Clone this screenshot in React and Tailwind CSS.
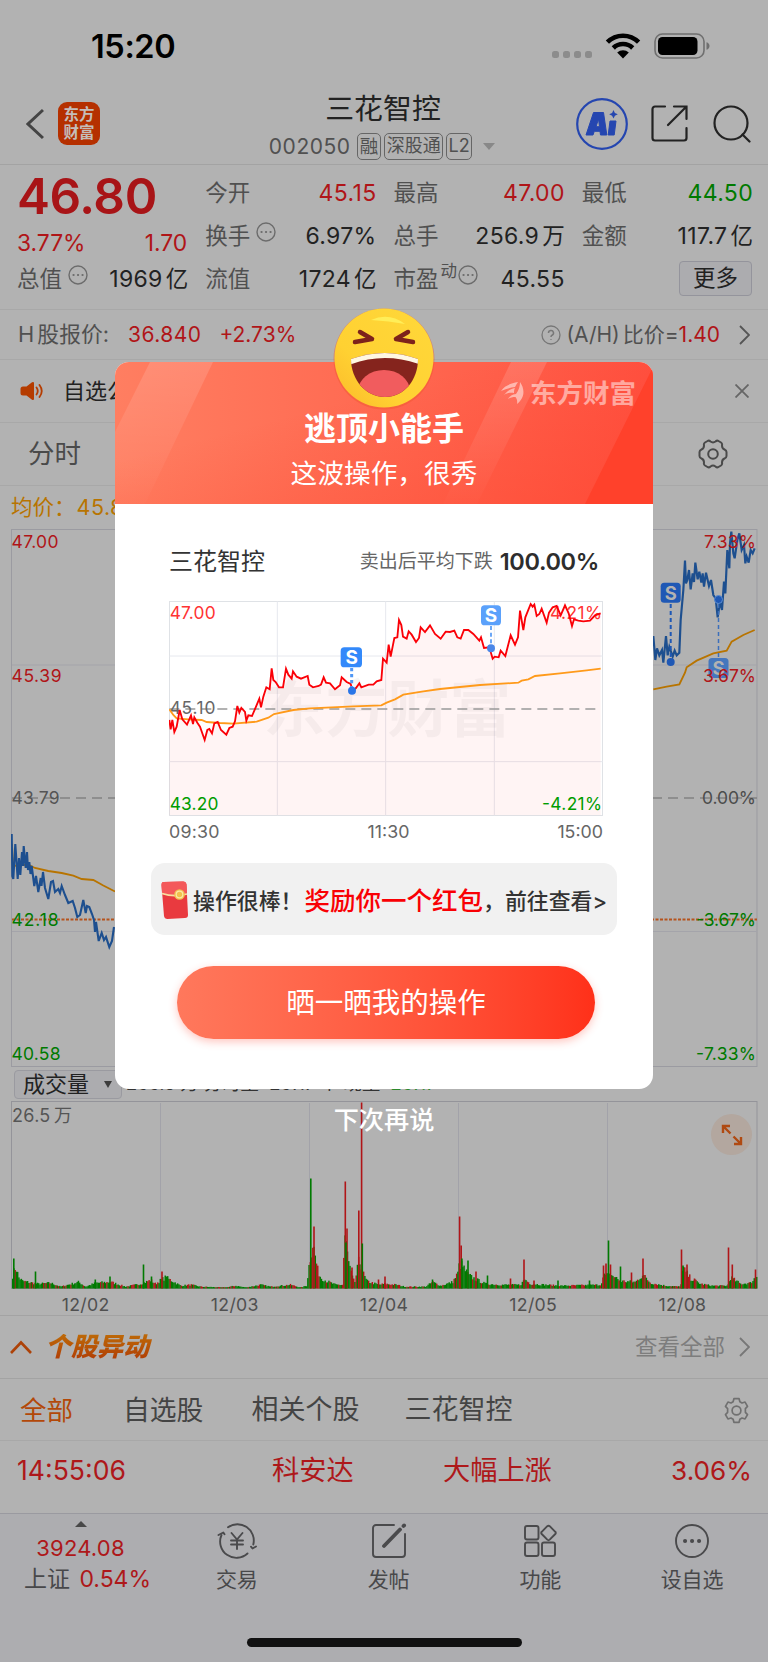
const STATS = [
    [
        { label: '今开', value: '45.15', color: 'text-[#b01518]' },
        { label: '换手', info: true, value: '6.97%' },
        { label: '流值', value: '1724', unit: '亿' },
    ],
    [
        { label: '最高', value: '47.00', color: 'text-[#b01518]' },
        { label: '总手', value: '256.9', unit: '万' },
        { label: '市盈', sup: '动', info: true, value: '45.55' },
    ],
    [
        { label: '最低', value: '44.50', color: 'text-[#007a00]' },
        { label: '金额', value: '117.7', unit: '亿' },
    ],
];

const DATES = ['12/02', '12/03', '12/04', '12/05', '12/08'];

const PRICE_LINE =
    '178,570 182,598 187,570 193,606 200,590 209,540 217,568 231,584 243,556 249,582 253,562 262,578 270,590 284,630 292,600 298,597 306,610 313,580 323,576 333,600 349,614 358,594 368,590 375,574 382,528 388,548 394,534 405,546 409,572 415,556 426,558 438,530 448,506 453,532 460,500 469,472 479,478 485,415 490,450 497,456 507,472 519,472 528,416 535,434 545,446 549,424 560,440 573,446 593,438 598,464 609,472 626,468 633,464 641,442 648,458 660,460 675,478 690,466 695,442 710,456 722,462 728,482 738,474 748,460 754,472 776,464 790,464 800,454 814,450 819,386 830,398 836,344 842,380 853,324 862,322 867,270 874,285 879,320 890,326 896,304 905,314 918,336 927,324 932,292 945,306 960,286 975,312 992,326 1007,305 1020,306 1033,302 1042,322 1052,326 1062,300 1075,300 1090,312 1108,332 1113,322 1122,354 1138,352 1148,386 1154,380 1166,382 1172,362 1186,378 1202,316 1215,344 1224,322 1230,242 1240,300 1246,262 1262,222 1268,230 1273,224 1280,258 1288,252 1295,236 1310,278 1317,248 1328,232 1340,228 1352,256 1365,226 1376,250 1386,288 1392,268 1405,272 1420,274 1440,272 1455,256 1472,250';

const AVG_LINE =
    '178,538 190,555 200,565 235,568 275,570 290,576 330,579 370,581 440,575 475,563 492,552 550,540 600,535 730,529 814,526 830,518 855,508 880,494 940,484 990,477 1050,471 1110,465 1225,458 1235,452 1255,448 1275,438 1350,430 1430,421 1472,416';

const DAY_LEFT =
    '11.7,834 12.3,876 13.3,879 15.3,844 17.7,879 19,858 20.3,875 22,852 23,866 23.7,846 25.7,868 27,852 28,870 29.3,862 30.5,874 31.7,866 34.3,886 36,876 38.3,892 40.7,878 41.5,886 43,872 45,888 48.3,899 51,882 53,881 55,892 58.3,889 60,893 61.7,886 65,895 68.3,903 72.7,901 75,908 77.3,917 80,915 83.3,900 85.7,913 87,906 89.3,907 92,914 94,920 95,932 96,922 98.7,941 101.7,933 104,940 106,937 109.3,947 112,941 114,927';

const DAY_RIGHT =
    '760,318 766,390 771,355 778,376 786,360 790,398 798,318 803,376 808,350 818,380 824,362 830,376 838,368 842,270 850,180 855,92 858,160 862,150 867,120 872,178 878,130 882,156 886,98 893,148 898,125 904,158 908,130 912,170 918,128 927,168 933,150 940,195 947,205 953,262 960,215 966,240 972,155 976,190 982,60 988,115 990,40 994,5 1000,70 1004,85 1012,30 1018,10 1025,60 1032,45 1036,100 1040,80 1046,98 1052,60 1058,70 1064,55';

// [x, height] outline that the one-minute volume bars fall under
const VOLUME_SHAPE = [
    [12, 14], [15, 24], [18, 12], [22, 8], [32, 6], [38, 5], [50, 6], [60, 2], [78, 7], [85, 2], [95, 6], [110, 7], [125, 2],
    [140, 5], [150, 9], [155, 5], [160, 9], [165, 12], [172, 8], [180, 3], [190, 4], [200, 2], [225, 1], [235, 3], [245, 1],
    [260, 4], [270, 2], [290, 4], [300, 1], [306, 3], [309, 30], [312, 50], [314, 38], [317, 20], [320, 12], [326, 8],
    [335, 4], [342, 4], [344, 58], [348, 28], [351, 14], [354, 6], [358, 28], [360, 28], [363, 15], [366, 8], [372, 6],
    [378, 4], [384, 5], [396, 4], [404, 2], [425, 2], [432, 7], [440, 3], [452, 7], [457, 16], [459, 27], [463, 22],
    [468, 14], [475, 10], [485, 5], [500, 4], [520, 4], [524, 10], [530, 5], [545, 4], [560, 3], [600, 4], [603, 14],
    [612, 14], [620, 8], [635, 7], [642, 15], [650, 6], [665, 3], [680, 2], [682, 22], [690, 11], [700, 5], [712, 3],
    [727, 3], [730, 12], [740, 5], [750, 6], [757, 15],
];

const VOLUME_SPIKES = [
    [13.8, 30, 'g'], [35.5, 17, 'g'], [95.3, 9, 'g'], [110, 12, 'g'], [143.5, 24, 'g'], [151.5, 12, 'g'], [162, 17, 'r'],
    [166.5, 12, 'g'], [310.8, 110, 'g'], [314, 62, 'r'], [345.3, 107, 'r'], [347, 60, 'r'], [345.9, 46, 'g'], [352, 21, 'r'],
    [358.8, 78, 'r'], [361.6, 186, 'r'], [362.3, 45, 'g'], [378.5, 9, 'r'], [385, 12, 'r'], [432.5, 9, 'g'], [459.6, 72, 'r'],
    [461.2, 43, 'r'], [461.9, 30, 'g'], [468, 28, 'g'], [476, 17, 'r'], [487.5, 13, 'g'], [510.5, 10, 'r'], [524, 29, 'r'],
    [534, 8, 'r'], [558, 8, 'g'], [589.5, 8, 'g'], [603.5, 23, 'r'], [606, 25, 'r'], [608.5, 48, 'g'], [610.5, 24, 'r'],
    [620.5, 22, 'g'], [631.5, 16, 'r'], [643, 30, 'r'], [681.5, 39, 'r'], [683, 23, 'g'], [687, 24, 'r'], [694.5, 10, 'r'],
    [728.5, 41, 'r'], [732.3, 24, 'r'], [755.5, 19, 'r'],
];

function volumeBars() {
    const bars = [];
    let seed = 7;
    let k = 0;
    for (let x = 12; x < 757; x += 1.24) {
        while (k < VOLUME_SHAPE.length - 2 && VOLUME_SHAPE[k + 1][0] < x) k++;
        const [x0, h0] = VOLUME_SHAPE[k];
        const [x1, h1] = VOLUME_SHAPE[k + 1];
        seed = (seed * 16807) % 2147483647;
        const r = seed / 2147483647;
        const h = h0 + ((h1 - h0) * (x - x0)) / (x1 - x0);
        bars.push({ x, h: Math.max(1.3, h * (0.7 + r * 0.45)), c: (r * 10) % 1 > 0.7 ? 'r' : 'g' });
    }
    return bars;
}

const BARS = volumeBars();

function InfoDot() {
    return (
        <svg className="w-5 h-5 shrink-0" viewBox="0 0 20 20" fill="none" stroke="#6c6c6c" strokeWidth="1.4">
            <circle cx="10" cy="10" r="9" />
            <path d="M5.5 10h.1M10 10h.1M14.5 10h.1" strokeWidth="2.2" strokeLinecap="round" />
        </svg>
    );
}

function Chevron({ color = '#555' }) {
    return (
        <svg className="w-[11px] h-5 shrink-0" viewBox="0 0 11 20" fill="none" stroke={color} strokeWidth="1.8">
            <path d="M1 1l9 9-9 9" />
        </svg>
    );
}

function SellMark({ x, y, size = 20, fill }) {
    return (
        <g>
            <rect x={x - size / 2} y={y - size / 2} width={size} height={size} rx="3.5" fill={fill} />
            <text x={x} y={y + size * 0.34} textAnchor="middle" fontSize={size * 0.92} fontWeight="700" fill="currentColor">S</text>
        </g>
    );
}

function StatusBar() {
    return (
        <div className="h-[92px] flex items-center justify-between pl-[91px] pr-[57px] pt-[2px]">
            <span className="text-[32.5px] font-semibold text-black leading-none tracking-[-0.4px]">15:20</span>
            <div className="flex items-center">
                <div className="flex gap-1 mt-[15px] mr-[13px]">
                    {[1, 2, 3, 4].map((i) => <span key={i} className="w-[7px] h-[7px] rounded-[2.5px] bg-[#8c8c8c]" />)}
                </div>
                <svg className="w-[36px] h-[26px] mr-[13px] -mt-[2px]" viewBox="0 0 36 26" fill="none" stroke="#000" strokeWidth="4.6">
                    <path d="M2.4 9.2a22 22 0 0 1 31.2 0" />
                    <path d="M8.3 15a13.8 13.8 0 0 1 19.4 0" />
                    <path d="M12.2 19.6a8.2 8.2 0 0 1 11.6 0L18 25.4z" fill="#000" stroke="none" />
                </svg>
                <svg className="w-[57px] h-[26px] -mt-[3px]" viewBox="0 0 57 26">
                    <rect x="1" y="1" width="49" height="24" rx="7.5" fill="none" stroke="#6f6f6f" strokeWidth="1.6" />
                    <rect x="4" y="4" width="39.5" height="18" rx="4.5" fill="#000" />
                    <path d="M52.5 9.2c4 1.200 4 6.400 0 7.600z" fill="#6f6f6f" />
                </svg>
            </div>
        </div>
    );
}

function Header() {
    return (
        <header className="h-[73px] border-b border-[#a3a3a3] grid grid-cols-[250px_1fr_250px] pb-[9px]">
            <div className="flex items-center pl-[26px] pb-[5px]">
                <svg className="w-[18px] h-8" viewBox="0 0 18 32" fill="none" stroke="#444" strokeWidth="3">
                    <path d="M17 2L2 16l15 14" />
                </svg>
                <div className="ml-[14px] w-[42px] h-[43px] rounded-[9px] bg-[#b53000] text-[#c4bdb9] text-[15.5px] font-bold leading-[18px] flex flex-col items-center justify-center">
                    <span>东方</span>
                    <span>财富</span>
                </div>
            </div>
            <div className="flex flex-col items-center">
                <h1 className="text-[28.9px] leading-[34px] text-[#222] -ml-[2px]">三花智控</h1>
                <div className="flex items-center h-7 mt-[6px] ml-[-4px] whitespace-nowrap text-[#505050]">
                    <span className="text-[21px] leading-none tracking-[0.55px] mr-[6px]">002050</span>
                    <span className="h-[27px] px-[2px] mr-[3px] border-[1.5px] border-[#666] rounded-[5px] text-[18.5px] leading-6">融</span>
                    <span className="h-[27px] w-[59px] text-center mr-[3px] border-[1.5px] border-[#666] rounded-[5px] text-[18px] leading-6">深股通</span>
                    <span className="h-[27px] w-[26px] text-center border-[1.5px] border-[#666] rounded-[5px] text-[18px] leading-6">L2</span>
                    <span className="ml-[11px] border-x-[6px] border-x-transparent border-t-[7px] border-t-[#888]" />
                </div>
            </div>
            <div className="flex items-center justify-end pr-[17px] pb-[5px]">
                <svg className="w-[52px] h-[52px] mr-[23px]" viewBox="0 0 52 52">
                    <circle cx="26" cy="26" r="24.800" fill="none" stroke="#2546b0" strokeWidth="2.200" />
                    <path d="M17.500 14.500h10l3.300 22.500h-6.300l-.5-3.700h-5.700L17 37h-7zM22.500 21l-2.500 7.700h3.500z" fill="#2546b0" fillRule="evenodd" stroke="#2546b0" strokeLinejoin="round" />
                    <path d="M34 23h6l-1.800 14h-6z" fill="#2546b0" stroke="#2546b0" strokeLinejoin="round" />
                    <path d="M37.500 12l1.400 2.900 2.900 1.400-2.900 1.400-1.400 2.900-1.400-2.900-2.900-1.400 2.900-1.400z" fill="#2546b0" />
                </svg>
                <svg className="w-[37px] h-[37px] mr-[25px]" viewBox="0 0 37 37" fill="none" stroke="#222" strokeWidth="2.200" strokeLinecap="round">
                    <path d="M14 1.500H4a2.500 2.500 0 0 0-2.500 2.500v29A2.500 2.500 0 0 0 4 35.500h29a2.500 2.500 0 0 0 2.500-2.500V23" />
                    <path d="M23 1.500h12.500V14M35 2L17 20" />
                </svg>
                <svg className="w-[38px] h-[38px]" viewBox="0 0 38 38" fill="none" stroke="#222" strokeWidth="2.200" strokeLinecap="round">
                    <circle cx="18" cy="18" r="16.500" />
                    <path d="M29.500 29.500l7 7" />
                </svg>
            </div>
        </header>
    );
}

function Stat({ label, sup, info, value, unit, color = 'text-[#222]' }) {
    return (
        <div className="h-[43px] flex items-center whitespace-nowrap">
            <span className="text-[22.5px] text-[#505050]">{label}</span>
            {sup && <span className="text-[16.5px] text-[#505050] ml-[2px] mb-4">{sup}</span>}
            {info && <span className={sup ? 'ml-[1px] mb-[10px]' : 'ml-[6px] mb-[10px]'}><InfoDot /></span>}
            <span className={`ml-auto flex items-center text-[23px] tracking-[0.35px] -mr-px ${color}`}>
                {value}
                {unit && <span className="ml-[3px] text-[22.5px] tracking-normal">{unit}</span>}
            </span>
        </div>
    );
}

function Quote() {
    return (
        <section className="h-[145px] border-b border-[#a8a8a8] pl-[17px] pr-4 pt-[7px] grid grid-cols-4 gap-x-[18px] leading-none">
            <div className="text-[22.8px] text-[#b01518]">
                <div className="h-[50px] flex items-center text-[49.5px] font-semibold tracking-[-0.4px] text-[#a81417]">46.80</div>
                <div className="h-[43px] flex items-center justify-between">
                    <span>3.77%</span>
                    <span>1.70</span>
                </div>
                <div className="-mt-[7px]">
                    <Stat label="总值" info value="1969" unit="亿" />
                </div>
            </div>
            {STATS.map((col, i) => (
                <div key={i}>
                    {col.map((s) => <Stat key={s.label} {...s} />)}
                    {i === 2 && (
                        <div className="h-[41px] flex items-center justify-end">
                            <button className="w-[73px] h-[35px] rounded border border-[#94949c] bg-[#acacaf] text-[22.5px] text-[#222]">更多</button>
                        </div>
                    )}
                </div>
            ))}
        </section>
    );
}

function DayChart() {
    return (
        <svg className="block ml-[11px] w-[747px] h-[538px] text-[#b2b2b2]" viewBox="11 529 747 538" fill="none">
            <rect x="11.500" y="529.500" width="745.500" height="537" stroke="#9b9ba1" />
            <path d="M12 665h745M12 931.500h745" stroke="#a4a4aa" />
            <path d="M12 798h745" stroke="#828282" strokeWidth="1.500" strokeDasharray="10 6" />
            <path d="M12 919.500h745" stroke="#b5531c" strokeWidth="2" strokeDasharray="3 1.500" />
            <g fontSize="17.500">
                <text x="11.500" y="547.500" fill="#b01518" textLength="47">47.00</text>
                <text x="11.500" y="681.500" fill="#b01518" textLength="50">45.39</text>
                <text x="11.500" y="803.500" fill="#555" textLength="48">43.79</text>
                <text x="11.500" y="925.500" fill="#007a00" textLength="47">42.18</text>
                <text x="11.500" y="1059.500" fill="#007a00" textLength="49">40.58</text>
            </g>
            <polyline points="12,844 13,866 28.300,864.600 35,868 48.300,871 61.700,873 73.300,875.600 81.700,879 93.300,880 103.300,885.500 115,891.500" stroke="#b87400" strokeWidth="1.800" />
            <polyline points={DAY_LEFT} stroke="#1d4f8f" strokeWidth="2.100" />
            <g transform="translate(400 530) scale(.33333)">
                <polyline points={DAY_RIGHT} stroke="#1d4f8f" strokeWidth="6.500" />
                <polyline points="760,478 800,470 838,463 855,428 860,412 890,392 940,370 980,362 995,335 1030,315 1064,300" stroke="#b87400" strokeWidth="5.500" />
            </g>
            <path d="M670.700 604v54" stroke="#1f58b5" strokeWidth="2" strokeDasharray="4 3" />
            <path d="M718.500 604v55" stroke="#3c6fbb" strokeWidth="1.500" strokeDasharray="4 3" />
            <circle cx="670.700" cy="662" r="4" fill="#1f58b5" />
            <circle cx="718.500" cy="599.500" r="4" fill="#1f58b5" stroke="#5b8bd0" />
            <SellMark x={670.7} y={592.7} fill="#1f58b5" />
            <SellMark x={718.5} y={668} fill="#4577bd" />
            <g fontSize="17.500" textAnchor="end">
                <text x="756" y="547.500" fill="#b01518" textLength="52">7.33%</text>
                <text x="756" y="681.500" fill="#b01518" textLength="53">3.67%</text>
                <text x="756" y="803.500" fill="#4c4c4c" textLength="54">0.00%</text>
                <text x="756" y="925.500" fill="#007a00" textLength="60">-3.67%</text>
                <text x="756" y="1059.500" fill="#007a00" textLength="60">-7.33%</text>
            </g>
        </svg>
    );
}

function VolumeChart() {
    const tint = (c) => (c === 'r' ? '#b01518' : '#007a00');
    return (
        <div className="relative ml-[11px] w-[747px] h-[188px]">
            <svg className="block w-full h-full" viewBox="11 1101 747 188">
                <rect x="11.500" y="1101.500" width="745.500" height="187" fill="none" stroke="#94949a" />
                <path d="M160.500 1103v185M309.500 1103v185M458.500 1103v185M607.500 1103v185" stroke="#a2a2a9" />
                {BARS.map((b) => <rect key={b.x} x={b.x} y={1288.500 - b.h} width="1.450" height={b.h} fill={tint(b.c)} />)}
                {VOLUME_SPIKES.map(([x, h, c]) => <rect key={x} x={x - 0.8} y={1288.500 - h} width="1.600" height={h} fill={tint(c)} />)}
            </svg>
            <span className="absolute left-[1px] top-[1px] text-[18px] text-[#555] tracking-[0.3px] [word-spacing:-2px]">26.5 万</span>
            <span className="absolute right-[6px] top-[13px] w-[41px] h-[41px] rounded-full bg-[#b3a79f] flex items-center justify-center">
                <svg className="w-[22px] h-[22px]" viewBox="0 0 22 22" fill="none" stroke="#b04a12" strokeWidth="2.400">
                    <path d="M9 2H2v7M2.500 2.500l7 7M13 20h7v-7M19.500 19.500l-7-7" />
                </svg>
            </span>
        </div>
    );
}

function Gear() {
    return (
        <svg className="w-[27px] h-[27px]" viewBox="0 0 24 24" fill="none" stroke="#707070" strokeWidth="1.500" strokeLinejoin="round">
            <path d="M9.700 1.500h4.600l.7 2.700 1.900 1.100 2.700-.8 2.200 3.900-1.900 2v3.200l1.900 2-2.200 3.900-2.700-.8-1.900 1.100-.7 2.700H9.700L9 19.800l-1.900-1.100-2.700.8-2.200-3.900 1.900-2v-3.200l-1.900-2 2.200-3.900 2.700.8L9 4.200z" />
            <circle cx="12" cy="12" r="3.900" />
        </svg>
    );
}

function Movers() {
    return (
        <section>
            <div className="h-[64px] border-y border-[#a3a3a3] flex items-center px-[10px] pr-[18px]">
                <svg className="w-[22px] h-[14px] mr-[13px]" viewBox="0 0 22 14" fill="none" stroke="#ad4208" strokeWidth="2.600">
                    <path d="M1 13L11 2.500 21 13" />
                </svg>
                <h2 className="text-[26px] font-black italic leading-none bg-linear-to-b from-[#bd6a08] to-[#b03c05] bg-clip-text text-transparent pr-2">个股异动</h2>
                <span className="ml-auto mr-[14px] text-[22.5px] text-[#7d7d7d]">查看全部</span>
                <Chevron color="#777" />
            </div>
            <div className="h-[62px] border-b border-[#a8a8a8] flex items-center pl-5 pr-[18px] pt-[2px] text-[27px] text-[#444] whitespace-nowrap">
                <span className="text-[#b34808] text-[26.5px]">全部</span>
                <span className="ml-[50px] text-[26.800px]">自选股</span>
                <span className="ml-[48px]">相关个股</span>
                <span className="ml-[45px]">三花智控</span>
                <span className="ml-auto"><Gear /></span>
            </div>
            <div className="h-[72px] pb-[12px] flex items-center pl-[17px] pr-4 text-[27.200px] text-[#ae181a] whitespace-nowrap">
                <span className="w-[255px] text-[26.600px]">14:55:06</span>
                <span className="w-[171px]">科安达</span>
                <span>大幅上涨</span>
                <span className="ml-auto text-[26.200px]">3.06%</span>
            </div>
        </section>
    );
}

function TabIcon({ children }) {
    return (
        <svg className="w-9 h-9 overflow-visible" viewBox="0 0 36 36" fill="none" stroke="#4a4a4c" strokeWidth="1.900" strokeLinecap="round" strokeLinejoin="round">
            {children}
        </svg>
    );
}

function TabBar() {
    return (
        <nav className="grow bg-[#adadb0] border-t border-[#9a9aa0] flex flex-col items-center">
            <div className="w-full grid grid-cols-[161px_repeat(4,1fr)] text-[21px] leading-none text-[#48484a]">
                <div className="flex flex-col items-center text-[22px] pt-[7px]">
                    <span className="border-x-[6px] border-x-transparent border-b-[6px] border-b-[#484848]" />
                    <span className="mt-[10px] text-[#ae181a] tracking-[0.2px]">3924.08</span>
                    <span className="mt-[9px] text-[23px] ml-[14px] whitespace-nowrap">上证 <span className="text-[#ae181a] ml-[3px]">0.54%</span></span>
                </div>
                <div className="flex flex-col items-center pt-[9px] gap-[10px]">
                    <TabIcon>
                        <path d="M9 4.300A16.300 16.300 0 0 1 34.300 21.500M28.500 30.500A16.300 16.300 0 0 1 2.500 12" />
                        <path d="M-.5 12l4.800-2.500 1.200 1.800M37 23.500l-3.500 2-1.500-1.800" />
                        <path d="M12.500 10l5.500 6.500 5.500-6.500M18 16.500V26M12 17.500h12M12 21.500h12" />
                    </TabIcon>
                    <span>交易</span>
                </div>
                <div className="flex flex-col items-center pt-[9px] gap-[10px]">
                    <TabIcon>
                        <path d="M23 2H5a3 3 0 0 0-3 3v26a3 3 0 0 0 3 3h26a3 3 0 0 0 3-3V11" />
                        <path d="M13 23L29 6.500M32.500 3l.6-.6" strokeWidth="3.800" />
                    </TabIcon>
                    <span>发帖</span>
                </div>
                <div className="flex flex-col items-center pt-[9px] gap-[10px]">
                    <TabIcon>
                        <rect x="3" y="3" width="13.500" height="13.500" rx="2" />
                        <rect x="3" y="19.500" width="13.500" height="13.500" rx="2" />
                        <rect x="20" y="19.500" width="13" height="13.500" rx="2" />
                        <path d="M25.300 3.200a1.800 1.800 0 0 1 2.400 0l5.600 5.600a1.500 1.500 0 0 1 0 2.200l-5.600 5.600a1.800 1.800 0 0 1-2.400 0L19.700 11a1.500 1.500 0 0 1 0-2.200z" />
                    </TabIcon>
                    <span>功能</span>
                </div>
                <div className="flex flex-col items-center pt-[9px] gap-[10px]">
                    <TabIcon>
                        <circle cx="18" cy="18" r="16" />
                        <path d="M11 18h.1M18 18h.1M25 18h.1" strokeWidth="4" />
                    </TabIcon>
                    <span>设自选</span>
                </div>
            </div>
            <div className="mt-auto mb-[15px] w-[275px] h-[9px] rounded-full bg-[#111]" />
        </nav>
    );
}

function Laugh() {
    return (
        <svg className="w-[106px] h-[106px]" viewBox="-3 -3 106 106">
            <defs>
                <clipPath id="mouth">
                    <path d="M17 51q34-12 67 0c0 21-14 38-33 38S17 72 17 51z" />
                </clipPath>
                <linearGradient id="face" x1="0" y1="1" x2="1" y2="0">
                    <stop offset="0" stopColor="#fbb92a" />
                    <stop offset=".35" stopColor="#ffd132" />
                    <stop offset="1" stopColor="#ffd83a" />
                </linearGradient>
            </defs>
            <circle cx="50" cy="51" r="50.500" fill="#f0562f" opacity=".45" />
            <circle cx="50" cy="50" r="49.500" fill="url(#face)" />
            <path d="M37 12q18-8 34 4-16-3-34-4z" fill="#ffee58" />
            <path d="M26 24l12 7-17 3M74 24l-12 7 17 3" fill="none" stroke="#7d221b" strokeWidth="4.500" strokeLinecap="round" strokeLinejoin="round" />
            <g clipPath="url(#mouth)">
                <path d="M10 40h80v60H10z" fill="#85241d" />
                <path d="M10 40h82v19q-41-18-82 0z" fill="#fff7e2" />
                <ellipse cx="50" cy="83" rx="26" ry="21" fill="#f15c5e" />
            </g>
        </svg>
    );
}

function ModalHeader() {
    return (
        <div className="relative h-[142px] rounded-t-[14px] overflow-hidden bg-linear-to-r from-[#ff7e61] to-[#ff5040] text-white">
            <svg className="absolute inset-0 w-full h-full" viewBox="0 0 538 142">
                <defs>
                    <linearGradient id="stripe" x1="0" y1="0" x2="0" y2="1">
                        <stop offset="0" stopColor="#fff" stopOpacity=".14" />
                        <stop offset="1" stopColor="#fff" stopOpacity=".01" />
                    </linearGradient>
                    <linearGradient id="shade" x1="0" y1="0" x2="1" y2="1">
                        <stop offset=".35" stopColor="#ff4028" stopOpacity="0" />
                        <stop offset="1" stopColor="#ff4028" stopOpacity=".4" />
                    </linearGradient>
                </defs>
                <path d="M0 0h538v142H0z" fill="url(#shade)" />
                <path d="M35 0h63L30 142H0V70z" fill="url(#stripe)" />
                <path d="M396 0h36l-70 142h-34z" fill="url(#stripe)" />
                <path d="M538 5v137h-68z" fill="#ff412b" />
            </svg>
            <div className="absolute right-[17px] top-[17px] flex items-center text-white/50">
                <svg className="w-[23px] h-6 mr-[6px]" viewBox="0 0 23 24" fill="currentColor">
                    <path d="M0 10C4 4 10 2.500 17 1c-1 1.500-2 3-3 5C9 6.500 5 8 0 10z" />
                    <path d="M3 14c3-4 6-6 11-7-1 2-1 3-1 5-4-.5-7 0-10 2z" />
                    <path d="M7 18c2-3 4-4.500 8-5 3-4 4-8 4-12 5 7 5 16-3 22 .5-3 0-5-1.500-7-3 0-5 .5-7.500 2z" />
                </svg>
                <span className="text-[26.500px] leading-[28px] font-bold">东方财富</span>
            </div>
            <div className="relative flex flex-col items-center pt-[49px]">
                <h3 className="text-[32px] leading-9 font-bold">逃顶小能手</h3>
                <p className="mt-[10px] text-[26.700px] leading-8">这波操作，很秀</p>
            </div>
        </div>
    );
}

function TradeChart() {
    return (
        <svg className="block w-[434px] h-[215px] text-white" viewBox="177 213 1302 645" fill="none">
            <rect x="178.500" y="214.500" width="1299" height="642" stroke="#dfe2e6" strokeWidth="3" />
            <path d="M178 378h1300M178 695h1300M502 214v642M827 214v642M1153 214v642" stroke="#e6e8ee" strokeWidth="3" />
            <text x="460" y="607" fontSize="186" fontWeight="700" fill="#000" opacity=".032">东方财富</text>
            <polygon points={`178,856 ${PRICE_LINE} 1472,856`} fill="#ff0000" opacity=".045" />
            <path d="M178 537h1296" stroke="#999" strokeWidth="4.500" strokeDasharray="30 18" />
            <g fontSize="52">
                <text x="179" y="266" fill="#f33" textLength="138">47.00</text>
                <text x="179" y="553" fill="#666" textLength="137">45.10</text>
                <text x="179" y="840" fill="#009c00" textLength="146">43.20</text>
                <text x="1476" y="266" fill="#f33" textAnchor="end" textLength="156">4.21%</text>
                <text x="1476" y="840" fill="#009c00" textAnchor="end" textLength="180">-4.21%</text>
            </g>
            <polyline points={AVG_LINE} stroke="#ff9a1a" strokeWidth="5.500" />
            <polyline points={PRICE_LINE} stroke="#fb0007" strokeWidth="5.500" />
            <path d="M725 414v60" stroke="#4f97f5" strokeWidth="9" strokeDasharray="10 8" />
            <path d="M1143 288v60" stroke="#4f97f5" strokeWidth="5" strokeDasharray="12 8" />
            <circle cx="726" cy="482" r="12" fill="#2a76e8" />
            <circle cx="1143" cy="355" r="12" fill="#4a87e8" />
            <rect x="692" y="352" width="64" height="60" rx="11" fill="#3389fa" />
            <text x="725" y="403" textAnchor="middle" fontSize="57" fontWeight="700" fill="currentColor">S</text>
            <rect x="1113" y="226" width="60" height="60" rx="11" fill="#5ba1fb" />
            <text x="1143" y="277" textAnchor="middle" fontSize="57" fontWeight="700" fill="currentColor">S</text>
        </svg>
    );
}

function RedPacket() {
    return (
        <svg className="w-[27px] h-[38px] shrink-0" viewBox="0 0 27 38">
            <path d="M2.500 1L22 .5q3 0 3.500 3L27 34q0 3-3 3L6.500 38q-3 0-3.500-3L.5 4q0-3 2-3z" fill="#e93a3f" />
            <path d="M2.500 1L22 .5q3 0 3.500 3l.5 10q-10 4-25-1L.5 4q0-3 2-3z" fill="#f4585a" />
            <path d="M1 12.500q12 4 25 .5" fill="none" stroke="#f8dfa0" strokeWidth="1.800" />
            <circle cx="18.500" cy="13.500" r="5.300" fill="#f2c14e" />
            <circle cx="18.500" cy="13.500" r="3.300" fill="none" stroke="#fae9a8" strokeWidth="1.200" />
        </svg>
    );
}

function ShareModal() {
    return (
        <div className="absolute inset-x-0 top-[362px] flex flex-col items-center">
            <div className="absolute -top-[57px] z-10"><Laugh /></div>
            <div className="w-[538px] h-[727px] rounded-[14px] bg-white">
                <ModalHeader />
                <div className="mx-[54px] pt-[42px] leading-8">
                    <div className="flex items-center justify-between">
                        <span className="text-[24px] text-[#333]">三花智控</span>
                        <span className="text-[19px] text-[#666] flex items-center">
                            卖出后平均下跌
                            <span className="ml-[7px] text-[23.500px] tracking-[-0.35px] font-semibold text-[#2d2d2d]">100.00%</span>
                        </span>
                    </div>
                    <div className="mt-[23px] w-[434px]">
                        <TradeChart />
                        <div className="h-[31px] flex items-center justify-between text-[17.800px] text-[#666]">
                            <span className="tracking-[0.2px]">09:30</span>
                            <span>11:30</span>
                            <span>15:00</span>
                        </div>
                    </div>
                </div>
                <div className="ml-9 mt-4 w-[466px] h-[72px] rounded-[14px] bg-[#f1f1f1] flex items-center pl-[10px] pt-[2px] text-[21.900px] font-medium text-[#333] whitespace-nowrap">
                    <RedPacket />
                    <span className="ml-[5px] pt-[3px]">操作很棒！</span>
                    <span className="text-[25.500px] ml-[2px] pt-[2px] text-[#f90004]">奖励你一个红包</span>
                    <span className="pt-[3px]">，前往查看&gt;</span>
                </div>
                <button className="block ml-[62px] mt-[31px] pt-[2px] w-[418px] h-[73px] rounded-full bg-linear-to-r from-[#ff785c] to-[#ff3019] text-white text-[28.500px] shadow-[0_3px_8px_rgba(255,70,50,0.3)]">
                    晒一晒我的操作
                </button>
            </div>
            <button className="mt-[13px] text-[25.200px] leading-9 font-medium text-white">下次再说</button>
        </div>
    );
}

export default function App() {
    return (
        <div className="relative w-[768px] h-[1662px] overflow-hidden bg-[#b2b2b2] flex flex-col font-['Inter','Noto_Sans_CJK_SC',sans-serif]">
            <StatusBar />
            <Header />
            <Quote />
            <div className="h-[50px] border-b border-[#a8a8a8] flex items-center pl-[18px] pr-[18px] text-[21px] text-[#505050] whitespace-nowrap">
                <span className="text-[21.800px] [word-spacing:-3px]">H 股报价:</span>
                <span className="ml-[19px] text-[#b01518] tracking-[0.45px]">36.840</span>
                <span className="ml-[18px] text-[#b01518]">+2.73%</span>
                <svg className="ml-auto w-5 h-5 mr-[5px]" viewBox="0 0 20 20" fill="none" stroke="#777" strokeWidth="1.300">
                    <circle cx="10" cy="10" r="9" />
                    <path d="M7.500 8a2.500 2.500 0 1 1 3.500 2.200q-1 .5-1 1.800M10 14v.8" strokeWidth="1.500" />
                </svg>
                <span className="[word-spacing:-3px]">(A/H) 比价=</span>
                <span className="text-[#b01518] mr-[19px]">1.40</span>
                <Chevron />
            </div>
            <div className="h-[63px] border-b border-[#a8a8a8] flex items-center pl-5 pr-[19px] text-[22px] text-[#222]">
                <svg className="w-[24px] h-[20px] mr-[19px]" viewBox="0 0 24 20" fill="#b53c00">
                    <path d="M3 5.500h3.500L12 1.300q2-1 2 1v15.400q0 2-2 1l-5.500-4.200H3q-2.500 0-2.500-2.500V8Q.5 5.500 3 5.500z" />
                    <path d="M16.500 6.500q2.500 3.500 0 7M19.500 4q4.500 6 0 12" fill="none" stroke="#b53c00" strokeWidth="1.800" strokeLinecap="round" />
                </svg>
                <span>自选公告速递</span>
                <svg className="ml-auto w-[14px] h-[14px]" viewBox="0 0 14 14" stroke="#666" strokeWidth="1.800">
                    <path d="M.5.5l13 13M13.500.5l-13 13" />
                </svg>
            </div>
            <div className="h-[63px] border-b border-[#a8a8a8] flex items-center justify-between pl-7 pr-10 pb-px text-[26.500px] text-[#4a4a4a]">
                <span>分时</span>
                <svg className="w-[30px] h-[30px]" viewBox="0 0 30 30" fill="none" stroke="#4a4a4a" strokeWidth="2" strokeLinejoin="round">
                    <path d="M9.500 2q1.500-1 3 .5 2.500 1.800 5 0 1.500-1.500 3-.5l2.500 1.500q1.500 1 1 3 0 3 2.500 4 2 .8 2 2.500v4q0 1.700-2 2.500-2.500 1-2.500 4 .5 2-1 3L20.500 28q-1.500 1-3-.5-2.500-1.800-5 0-1.500 1.500-3 .5L7 26.500q-1.500-1-1-3 0-3-2.500-4-2-.8-2-2.500v-4q0-1.700 2-2.500 2.500-1 2.500-4-.5-2 1-3z" />
                    <circle cx="15" cy="15" r="4.800" />
                </svg>
            </div>
            <div className="h-[43px] shrink-0 flex items-center pl-[11px] text-[21.500px] text-[#b87400] whitespace-nowrap">
                均价：<span className="ml-[1px] tracking-[0.5px]">45.874</span>
            </div>
            <DayChart />
            <div className="h-[34px] shrink-0 flex items-center pl-[14px] whitespace-nowrap">
                <div className="w-[108px] h-[29px] rounded border border-[#9a9aa0] bg-[#acacaf] flex items-center justify-between pl-2 pr-[9px] text-[22px] leading-none text-[#222]">
                    <span>成交量</span>
                    <span className="border-x-[4.500px] border-x-transparent border-t-[7px] border-t-[#3c3c3c]" />
                </div>
                <span className="ml-1 text-[18.300px] text-[#333]">266.5 万 分时量: 267.7 个 现量: <span className="text-[#2c8a2c]">267.7</span></span>
            </div>
            <VolumeChart />
            <div className="h-[26px] shrink-0 mx-[11px] pt-[3px] grid grid-cols-5 items-center text-center text-[17.700px] tracking-[0.3px] text-[#505050]">
                {DATES.map((d) => <span key={d}>{d}</span>)}
            </div>
            <Movers />
            <TabBar />
            <ShareModal />
        </div>
    );
}
